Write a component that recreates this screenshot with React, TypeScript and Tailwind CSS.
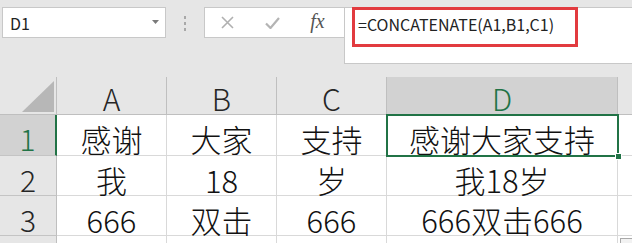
import React from "react";

const FONT = { fontFamily: '"Noto Sans CJK SC", "Noto Sans", sans-serif' };

const HEADERS = ["A", "B", "C", "D"];

const ROWS: string[][] = [
  ["感谢", "大家", "支持", "感谢大家支持"],
  ["我", "18", "岁", "我18岁"],
  ["666", "双击", "666", "666双击666"],
  ["", "", "", ""],
];

const ROW_HEIGHTS = ["h-[41px]", "h-[40px]", "h-[40px]", "h-[40px]"];

function NameBox() {
  return (
    <div className="ml-[2px] w-[164px] h-[31px] bg-white border border-[#c8c8c8] flex items-center pl-[7px] pr-[6px]">
      <span className="flex-1 text-[16px] text-[#222] leading-none">D1</span>
      <svg width="7" height="4" viewBox="0 0 7 4" className="mb-[1px]">
        <polygon points="0,0 7,0 3.5,4" fill="#7a7a7a" />
      </svg>
    </div>
  );
}

function FormulaButtons() {
  return (
    <div className="w-[140px] h-[31px] bg-white border-t border-b border-l border-[#c8c8c8] flex items-center">
      <div className="w-[45px] flex justify-center">
        <svg width="13" height="13" viewBox="0 0 13 13">
          <path d="M1 1 L12 12 M12 1 L1 12" stroke="#b0b0b0" strokeWidth="1.6" fill="none" />
        </svg>
      </div>
      <div className="w-[45px] flex justify-center">
        <svg width="15" height="12" viewBox="0 0 15 12">
          <path d="M1 6.5 L5.5 11 L14 1" stroke="#b4b4b4" strokeWidth="2.2" fill="none" />
        </svg>
      </div>
      <div className="w-[45px] flex justify-center">
        <span
          className="text-[20px] italic text-[#555] leading-none -mt-[3px]"
          style={{ fontFamily: '"Liberation Serif", "DejaVu Serif", serif' }}
        >
          fx
        </span>
      </div>
    </div>
  );
}

function Toolbar() {
  return (
    <div className="h-[64px] flex items-start pt-[7px]">
      <NameBox />
      <div className="w-[38px] h-[31px] flex flex-col items-center pt-[9px] gap-[3px]">
        <div className="w-[2px] h-[3px] bg-[#a8a8a8]" />
        <div className="w-[2px] h-[3px] bg-[#a8a8a8]" />
        <div className="w-[2px] h-[3px] bg-[#a8a8a8]" />
      </div>
      <FormulaButtons />
      <div className="flex-1 h-[57px] bg-white border-l border-t border-b border-[#c8c8c8]">
        <div className="h-[32px] flex items-center pl-[13px] text-[16px] text-[#222] leading-none">
          =CONCATENATE(A1,B1,C1)
        </div>
      </div>
    </div>
  );
}

function Grid() {
  return (
    <div className="mt-[13px] grid grid-cols-[57px_110px_110px_110px_231px_1fr] font-light">
      {/* header row */}
      <div className="h-[38px] border-r border-b border-[#bfbfbf] relative">
        <svg width="57" height="37" viewBox="0 0 57 37" className="absolute left-0 top-0">
          <polygon points="22,35 54,35 54,4" fill="#b7b7b7" />
        </svg>
      </div>
      {HEADERS.map((h) => (
        <div
          key={h}
          className={
            h === "D"
              ? "h-[38px] bg-[#d2d2d2] border-r border-b border-[#bfbfbf] flex items-center justify-center pt-[4px] text-[30px] leading-none text-[#217346]"
              : "h-[38px] border-r border-b border-[#bfbfbf] flex items-center justify-center pt-[4px] text-[30px] leading-none text-[#262626]"
          }
        >
          {h}
        </div>
      ))}
      <div className="h-[38px] border-b border-[#bfbfbf]" />

      {ROWS.map((row, i) => (
        <React.Fragment key={i}>
          <div
            className={
              i === 0
                ? `${ROW_HEIGHTS[i]} bg-[#d2d2d2] border-r-2 border-r-[#217346] border-b border-b-[#c4c4c4] flex items-center justify-center pt-[6px] text-[30px] leading-none text-[#217346]`
                : `${ROW_HEIGHTS[i]} border-r border-r-[#bfbfbf] border-b border-b-[#c4c4c4] flex items-center justify-center pt-[6px] text-[30px] leading-none text-[#262626]`
            }
          >
            {i < 3 ? i + 1 : ""}
          </div>
          {row.map((v, j) => (
            <div
              key={j}
              className={`${ROW_HEIGHTS[i]} bg-white border-r border-b border-[#d9d9d9] flex items-center justify-center pt-[7px] text-[31px] leading-none text-[#111] whitespace-nowrap`}
            >
              {v}
            </div>
          ))}
          <div className={`${ROW_HEIGHTS[i]} bg-white border-b border-[#d9d9d9]`} />
        </React.Fragment>
      ))}
    </div>
  );
}

export default function App() {
  return (
    <div className="relative w-[632px] h-[243px] overflow-hidden bg-[#e6e6e6]" style={FONT}>
      <Toolbar />
      <Grid />

      {/* red annotation around the formula */}
      <div className="absolute left-[352px] top-[7px] w-[226px] h-[40px] border-[3px] border-[#e23b3f]" />

      {/* selected cell D1 */}
      <div className="absolute left-[386px] top-[114px] w-[233px] h-[43px] border-2 border-[#217346]" />
      <div className="absolute left-[615px] top-[153px] w-[7px] h-[7px] bg-[#217346] border border-white" />

      {/* paste options corner */}
      <div className="absolute left-[620px] top-[238px] w-[16px] h-[14px] border border-[#a9a9a9] bg-[#f2f2f2]" />
    </div>
  );
}
